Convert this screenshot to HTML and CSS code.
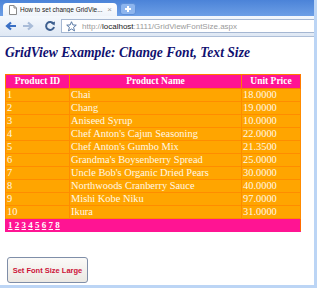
FILE: index.html
```html
<!DOCTYPE html>
<html lang="en">

<head>
     <meta charset="UTF-8">
     <meta name="viewport" content="width=device-width, initial-scale=1.0">
     <title>How to set change GridView font size</title>
     <link rel="stylesheet" href="styles.css">
</head>

<body>
     <div class="window">
          <div class="tabbar">
               <div class="tab">
                    <svg class="page-icon" width="8" height="10" viewBox="0 0 8 10">
                         <path d="M0.5 0.5 H5 L7.5 3 V9.5 H0.5 Z" fill="#fff" stroke="#8a8a8a" />
                         <path d="M5 0.5 V3 H7.5" fill="none" stroke="#8a8a8a" />
                    </svg>
                    <span class="tab-title">How to set change GridVie...</span>
                    <span class="tab-close">&times;</span>
               </div>
               <div class="newtab">
                    <svg width="8" height="8" viewBox="0 0 8 8">
                         <path d="M4 1 V7 M1 4 H7" stroke="#fff" stroke-width="2" />
                    </svg>
               </div>
          </div>

          <div class="toolbar">
               <span class="tool">
                    <svg width="12" height="10" viewBox="0 0 12 10">
                         <path d="M11 5 H3 M6 1.5 L2 5 L6 8.5" fill="none" stroke="#3a6fc4" stroke-width="2.2" />
                    </svg>
               </span>
               <span class="tool">
                    <svg width="12" height="10" viewBox="0 0 12 10">
                         <path d="M1 5 H9 M6 1.5 L10 5 L6 8.5" fill="none" stroke="#a9bcd8" stroke-width="2.2" />
                    </svg>
               </span>
               <span class="tool reload">
                    <svg width="12" height="12" viewBox="0 0 12 12">
                         <path d="M9.6 4 A4 4 0 1 0 10 7" fill="none" stroke="#3d5f8f" stroke-width="2" />
                         <path d="M7 3.2 L11 1.5 L10.6 5.6 Z" fill="#3d5f8f" />
                    </svg>
               </span>
               <div class="address">
                    <svg class="star" width="11" height="11" viewBox="0 0 12 12">
                         <path d="M6 0.8 L7.5 4.3 L11.2 4.5 L8.3 6.9 L9.3 10.8 L6 8.7 L2.7 10.8 L3.7 6.9 L0.8 4.5 L4.5 4.3 Z" fill="#fff" stroke="#4d6e9e" stroke-width="1" />
                    </svg>
                    <span class="url">http://<b>localhost</b>:1111/GridViewFontSize.aspx</span>
               </div>
          </div>

          <div class="content">
               <h2>GridView Example: Change Font, Text Size</h2>

               <table class="grid">
                    <thead>
                         <tr>
                              <th class="col-id">Product ID</th>
                              <th class="col-name">Product Name</th>
                              <th class="col-price">Unit Price</th>
                         </tr>
                    </thead>
                    <tbody>
                         <tr><td>1</td><td>Chai</td><td>18.0000</td></tr>
                         <tr><td>2</td><td>Chang</td><td>19.0000</td></tr>
                         <tr><td>3</td><td>Aniseed Syrup</td><td>10.0000</td></tr>
                         <tr><td>4</td><td>Chef Anton's Cajun Seasoning</td><td>22.0000</td></tr>
                         <tr><td>5</td><td>Chef Anton's Gumbo Mix</td><td>21.3500</td></tr>
                         <tr><td>6</td><td>Grandma's Boysenberry Spread</td><td>25.0000</td></tr>
                         <tr><td>7</td><td>Uncle Bob's Organic Dried Pears</td><td>30.0000</td></tr>
                         <tr><td>8</td><td>Northwoods Cranberry Sauce</td><td>40.0000</td></tr>
                         <tr><td>9</td><td>Mishi Kobe Niku</td><td>97.0000</td></tr>
                         <tr><td>10</td><td>Ikura</td><td>31.0000</td></tr>
                    </tbody>
                    <tfoot>
                         <tr>
                              <td colspan="3" class="pager">
                                   <a href="#">1</a> <a href="#">2</a> <a href="#">3</a> <a href="#">4</a>
                                   <a href="#">5</a> <a href="#">6</a> <a href="#">7</a> <a href="#">8</a>
                              </td>
                         </tr>
                    </tfoot>
               </table>

               <button class="size-btn">Set Font Size Large</button>
          </div>
     </div>
</body>

</html>
```

FILE: styles.css
```css
body {
     margin: 0;
     padding: 0;
     background-color: #fff;
     font-family: "Liberation Serif", serif;
}

.window {
     width: 314px;
     height: 285px;
     border-right: 3px solid #bcd5f5;
     border-bottom: 3px solid #bcd5f5;
     background-color: #fff;
     overflow: hidden;
}

.tabbar {
     height: 16px;
     display: flex;
     align-items: flex-end;
     padding-left: 3px;
     background: linear-gradient(#4b83d8, #6d9fe6);
}

.tab {
     box-sizing: border-box;
     width: 114px;
     height: 13px;
     display: flex;
     align-items: center;
     gap: 3px;
     padding: 0 5px 0 6px;
     background: linear-gradient(#ffffff, #eef3fa);
     border-radius: 4px 4px 0 0;
     font-family: "Liberation Sans", sans-serif;
     font-size: 6.5px;
     color: #222;
}

.tab-title {
     flex: 1;
     white-space: nowrap;
     overflow: hidden;
}

.tab-close {
     color: #999;
     font-size: 8px;
}

.newtab {
     width: 14px;
     height: 10px;
     margin: 0 0 1px 3px;
     display: flex;
     align-items: center;
     justify-content: center;
     background-color: #8db5ee;
     border: 1px solid #5d8fd8;
     border-radius: 3px;
}

.toolbar {
     height: 20px;
     display: flex;
     align-items: center;
     gap: 3px;
     padding-left: 4px;
     background: linear-gradient(#f4f8fd, #dfe8f4);
     border-bottom: 1px solid #aebfd8;
}

.tool {
     width: 14px;
     height: 14px;
     display: flex;
     align-items: center;
     justify-content: center;
}

.reload {
     margin: 0 1px 0 5px;
}

.address {
     flex: 1;
     height: 12px;
     display: flex;
     align-items: center;
     gap: 5px;
     padding-left: 4px;
     background-color: #fff;
     border: 1px solid #a5b7d2;
     border-right: none;
     font-family: "Liberation Sans", sans-serif;
     font-size: 8px;
     color: #9a9a9a;
     white-space: nowrap;
}

.address b {
     font-weight: normal;
     color: #222;
}

.content {
     padding: 7px 0 0 5px;
}

h2 {
     margin: 0 0 12px 0;
     font-size: 13.6px;
     line-height: 18px;
     font-style: italic;
     font-weight: bold;
     color: #101070;
}

.grid {
     width: 296px;
     border-collapse: collapse;
     border: 1px solid #ff6a00;
     font-size: 10.4px;
     color: #fff8e6;
}

.grid th {
     height: 13px;
     padding: 0;
     background-color: #ff1493;
     color: #fff;
     font-size: 9.5px;
     font-weight: bold;
     line-height: 13px;
     border: 1px solid #ff7a00;
}

.col-id {
     width: 63px;
}

.col-price {
     width: 58px;
}

.grid td {
     height: 12px;
     padding: 0 1px;
     line-height: 12px;
     background-color: #ffa500;
     border: 1px solid #ff8c00;
     white-space: nowrap;
}

.grid td.pager {
     height: 12px;
     padding: 0 2px;
     background-color: #ff1493;
     border-color: #ff1493 #ff6a00 #ff1493 #ff1493;
     font-size: 9px;
     font-weight: bold;
}

.pager a {
     color: #fff;
}

.size-btn {
     margin: 25px 0 0 2px;
     width: 81px;
     height: 26px;
     padding: 0;
     font-family: "Liberation Sans", sans-serif;
     font-size: 7.5px;
     font-weight: bold;
     color: #cc1238;
     background: linear-gradient(#fbfaf8, #ebe8e2);
     border: 1px solid #7f8ea8;
     border-radius: 3px;
}
```
